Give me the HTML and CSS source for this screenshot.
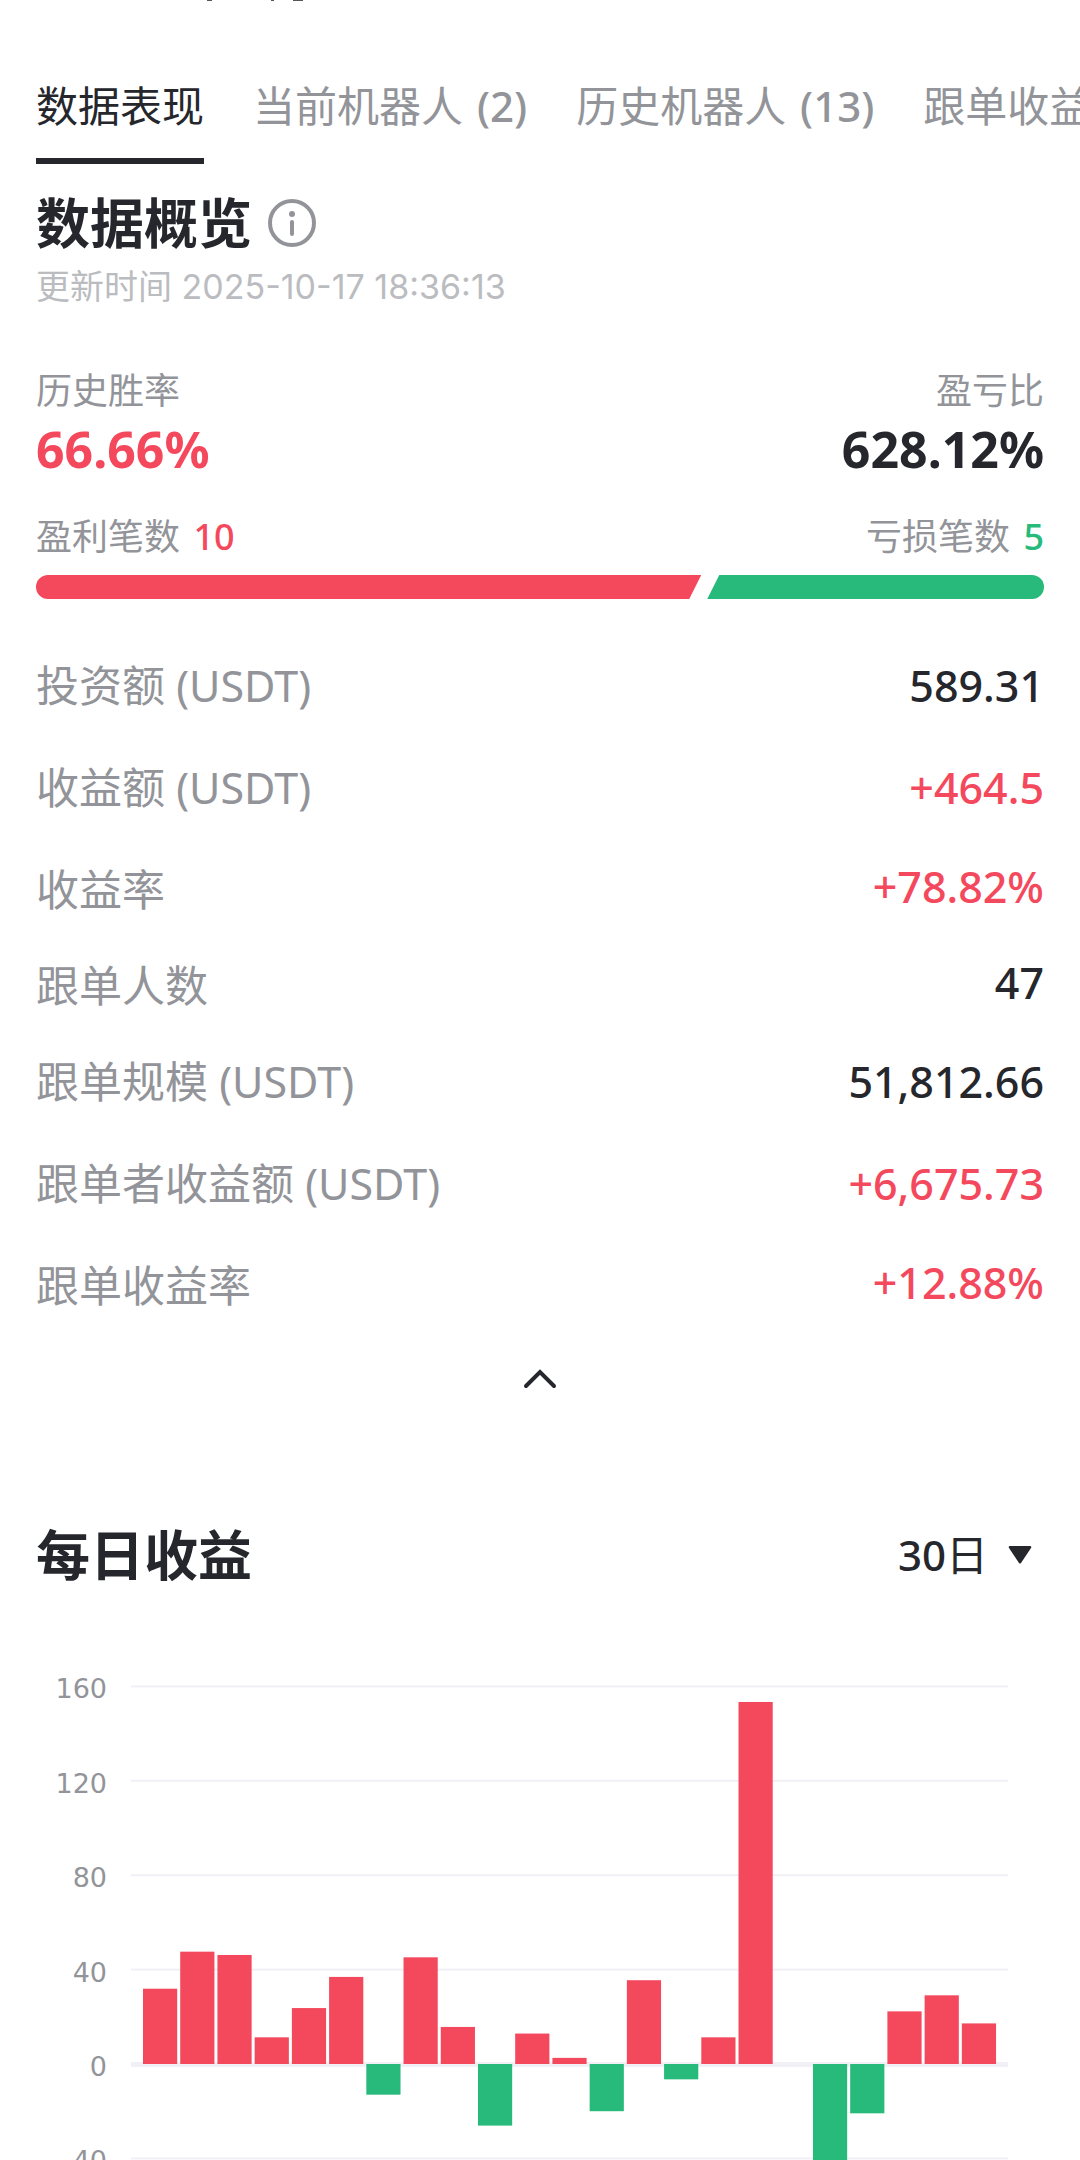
FILE: index.html
```html
<!DOCTYPE html>
<html lang="zh-CN">

<head>
    <meta charset="UTF-8">
    <meta name="viewport" content="width=device-width, initial-scale=1.0">
    <title>数据表现</title>
    <link rel="stylesheet" href="styles.css">
</head>

<body>
    <main class="page">
        <!-- Lower edge of the header that is scrolled away -->
        <svg class="scrolled" width="300" height="2" viewBox="0 0 300 2" aria-hidden="true">
            <path d="M171 0h5v1h-5zM235 0h3v1h-3zM257 0h10v1h-10z" fill="#55565c" />
        </svg>
        <nav class="tabs">
            <a class="tab active" href="#data">数据表现</a>
            <a class="tab" href="#current">当前机器人 <span class="count">(2)</span></a>
            <a class="tab" href="#history">历史机器人 <span class="count">(13)</span></a>
            <a class="tab" href="#follow">跟单收益</a>
        </nav>

        <section class="overview" id="data">
            <div class="title-row">
                <h2>数据概览</h2>
                <button class="icon-btn" type="button" aria-label="说明">
                    <svg width="48" height="48" viewBox="0 0 48 48">
                        <circle cx="24" cy="24" r="22" fill="none" stroke="#929499" stroke-width="4" />
                        <circle cx="24" cy="15" r="3" fill="#929499" />
                        <path d="M24 23v12" stroke="#929499" stroke-width="4" stroke-linecap="round" />
                    </svg>
                </button>
            </div>
            <p class="updated">更新时间 2025-10-17 18:36:13</p>

            <div class="split rate-labels"><span>历史胜率</span><span>盈亏比</span></div>
            <div class="split rates"><strong class="red">66.66%</strong><strong>628.12%</strong></div>
            <div class="split counts">
                <span>盈利笔数 <b class="red">10</b></span>
                <span>亏损笔数 <b class="green">5</b></span>
            </div>
            <div class="ratio">
                <div class="ratio-win" style="width: 66%"></div>
                <div class="ratio-loss"></div>
            </div>

            <dl class="stats">
                <div class="stat unit"><dt>投资额 (USDT)</dt><dd>589.31</dd></div>
                <div class="stat unit"><dt>收益额 (USDT)</dt><dd class="red">+464.5</dd></div>
                <div class="stat"><dt>收益率</dt><dd class="red">+78.82%</dd></div>
                <div class="stat"><dt>跟单人数</dt><dd>47</dd></div>
                <div class="stat unit"><dt>跟单规模 (USDT)</dt><dd>51,812.66</dd></div>
                <div class="stat unit"><dt>跟单者收益额 (USDT)</dt><dd class="red">+6,675.73</dd></div>
                <div class="stat"><dt>跟单收益率</dt><dd class="red">+12.88%</dd></div>
            </dl>

            <button class="icon-btn collapse" type="button" aria-label="收起">
                <svg width="36" height="24" viewBox="0 0 36 24">
                    <path d="M4 19L18 5l14 14" fill="none" stroke="#25272d" stroke-width="4" stroke-linecap="round" />
                </svg>
            </button>
        </section>

        <section class="daily">
            <div class="split daily-head">
                <h2>每日收益</h2>
                <button class="range" type="button">
                    <span><span class="count">30</span>日</span>
                    <svg width="24" height="20" viewBox="0 0 24 20">
                        <path d="M2 1h20q2 0 1 2L13 18q-1 1-2 0L1 3Q0 1 2 1z" fill="#25272d" />
                    </svg>
                </button>
            </div>
            <svg class="chart" id="chart" viewBox="0 0 1008 640" role="img" aria-label="每日收益"></svg>
        </section>
    </main>

    <script>
        const values = [31.9, 47.6, 46.2, 11.3, 23.7, 36.9, -13, 45.2, 15.7, -26.1, 12.9, 2.6,
            -20, 35.5, -6.5, 11.3, 153.4, 0, -60, -20.9, 22.3, 29.1, 17.2];
        const chart = document.getElementById("chart");
        const zero = 404;       // y of the zero line
        const scale = 2.36;     // pixels per unit

        function add(name, attrs, text) {
            const el = document.createElementNS("http://www.w3.org/2000/svg", name);
            for (const key in attrs) {
                el.setAttribute(key, attrs[key]);
            }
            if (text !== undefined) {
                el.textContent = text;
            }
            chart.appendChild(el);
        }

        // Grid lines and axis labels
        [160, 120, 80, 40, 0, -40, -80].forEach(tick => {
            const y = zero - tick * scale;
            add("rect", { class: "grid", x: 95, y: y - (tick ? 1 : 2), width: 877, height: tick ? 2 : 5 });
            add("text", { class: "tick", x: 71, y: y + 12 }, tick);
        });

        // One bar per day
        values.forEach((value, i) => {
            const height = Math.abs(value) * scale;
            add("rect", {
                class: value < 0 ? "bar-down" : "bar-up",
                x: 107 + i * 37.22,
                y: value < 0 ? zero : zero - height,
                width: 34.2,
                height: height
            });
        });
    </script>
</body>

</html>
```
FILE: styles.css
```css
* {
    box-sizing: border-box;
}

body {
    margin: 0;
    background-color: white;
    color: #25272d;
    font-family: "Noto Sans", "Noto Sans CJK SC", sans-serif;
    font-size: 42px;
}

h2,
p,
dl,
dd {
    margin: 0;
}

button {
    border: 0;
    padding: 0;
    background: none;
    color: inherit;
    font: inherit;
}

svg {
    display: block;
}

.page {
    height: 100vh;
    padding: 0 36px;
    overflow: hidden;
}

.red {
    color: #f4485d;
}

.green {
    color: #27ba7b;
}

.count {
    font-weight: 500;
}

/* Tabs */
.tabs {
    display: flex;
    gap: 49px;
    margin: 58px -36px 0 0;
    overflow: hidden;
    white-space: nowrap;
}

.tab {
    height: 104px;
    line-height: 92px;
    color: #929499;
    text-decoration: none;
}

.tab .count {
    margin-left: 3px;
}

.tab.active {
    border-bottom: 6px solid #25272d;
    color: #25272d;
}

/* Overview */
h2 {
    font-size: 54px;
    line-height: 72px;
    font-weight: 600;
}

.title-row {
    display: flex;
    align-items: center;
    gap: 16px;
    margin-top: 23px;
}

.updated {
    margin-top: 4px;
    font-family: Inter, "Noto Sans CJK SC", sans-serif;
    font-size: 34px;
    line-height: 48px;
    color: #bbbcbf;
}

.split {
    display: flex;
    justify-content: space-between;
    align-items: center;
}

.rate-labels,
.counts {
    font-size: 36px;
    line-height: 54px;
    color: #929499;
}

.rate-labels {
    margin-top: 53px;
}

.rates {
    font-size: 50px;
    line-height: 62px;
}

.counts {
    margin-top: 30px;
}

.counts b {
    margin-left: 4px;
    font-weight: 500;
}

.ratio {
    display: flex;
    gap: 6px;
    height: 24px;
    margin-top: 11px;
    border-radius: 12px;
    overflow: hidden;
}

.ratio-win {
    background-color: #f4485d;
    clip-path: polygon(0 0, 100% 0, calc(100% - 12px) 100%, 0 100%);
}

.ratio-loss {
    flex: 1;
    background-color: #27ba7b;
    clip-path: polygon(12px 0, 100% 0, 100% 100%, 0 100%);
}

.stats {
    margin-top: 36px;
    font-size: 43px;
}

.stat {
    display: flex;
    justify-content: space-between;
    line-height: 96px;
}

.stat dt {
    padding-top: 3px;
    margin-bottom: -3px;
    color: #929499;
}

.stat.unit {
    line-height: 102px;
}

.stat.unit dt {
    padding-top: 0;
    margin-bottom: 0;
}

.stat dd {
    font-weight: 500;
}

.collapse {
    display: block;
    margin: 36px auto 0;
}

/* Daily profit */
.daily {
    margin-top: 128px;
}

.range {
    display: flex;
    align-items: center;
    gap: 20px;
    padding-right: 12px;
    line-height: 60px;
}

.chart {
    width: 100%;
    margin-top: 69px;
}

.grid {
    fill: #f0f0f6;
}

.tick {
    fill: #929499;
    font-family: "DejaVu Sans", sans-serif;
    font-size: 27px;
    text-anchor: end;
}

.bar-up {
    fill: #f4485d;
}

.bar-down {
    fill: #27ba7b;
}
```
